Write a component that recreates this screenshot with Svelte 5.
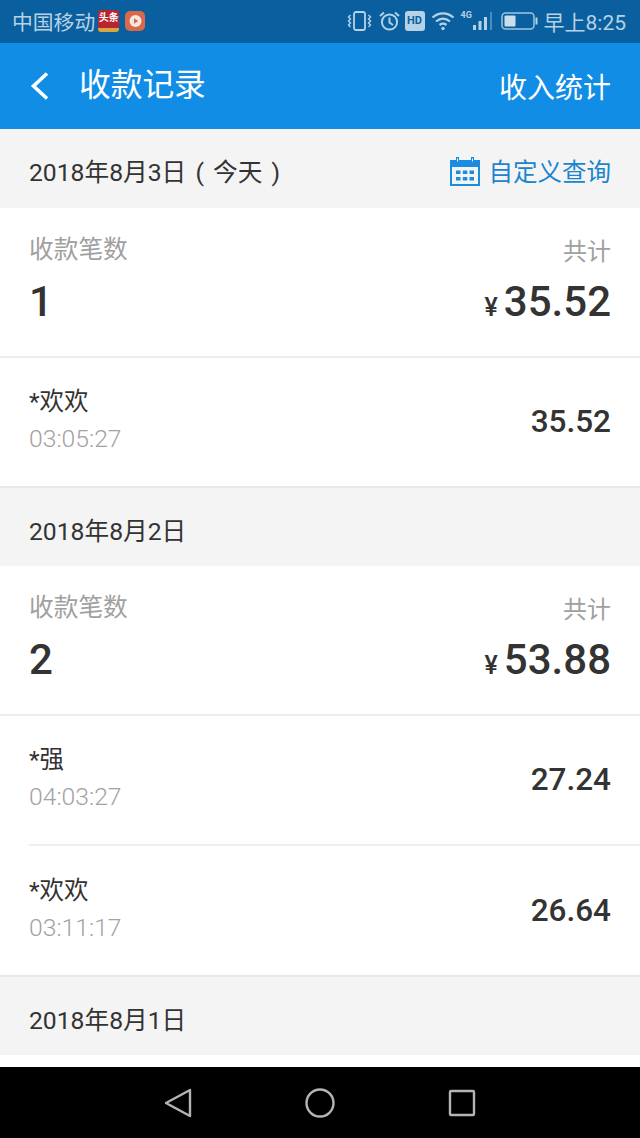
<script>
  const days = [
    { date: '2018年8月3日 ( 今天 )', today: true, count: 1, total: '35.52', rows: [{ name: '*欢欢', time: '03:05:27', amount: '35.52' }] },
    { date: '2018年8月2日', count: 2, total: '53.88', rows: [{ name: '*强', time: '04:03:27', amount: '27.24' }, { name: '*欢欢', time: '03:11:17', amount: '26.64' }] },
    { date: '2018年8月1日', rows: [] }
  ];
</script>

<div class="page">
  <div class="status">
    <div class="status-left">
      <span>中国移动</span>
      <span class="app-red">头条</span>
      <span class="app-video">
        <svg width="15" height="15" viewBox="0 0 14 14"><circle cx="7" cy="7.400" r="5.600" fill="#f4e9e2"/><path d="M5.600 5v5l4-2.500z" fill="#d8694a"/></svg>
      </span>
    </div>
    <div class="status-right">
      <svg class="s-vib" width="25" height="22" viewBox="0 0 25 22" fill="none" stroke="#b5d2e6" stroke-width="1.800">
        <rect x="7" y="2" width="11" height="18" rx="2"/>
        <path d="M3.500 5L1.500 7l2 2-2 2 2 2-2 2 2 2M21.500 5l2 2-2 2 2 2-2 2 2 2-2 2" stroke-width="1.400"/>
      </svg>
      <svg class="s-alarm" width="23" height="22" viewBox="0 0 23 22" fill="none" stroke="#b5d2e6" stroke-width="2">
        <circle cx="11.500" cy="12" r="7.600"/>
        <path d="M11.500 7.500v5l3.500 2.500M2 6l4-3.500M21 6l-4-3.500"/>
      </svg>
      <span class="hd">HD</span>
      <svg class="s-wifi" width="24" height="20" viewBox="0 0 24 20" fill="none" stroke="#b5d2e6" stroke-width="2.200">
        <path d="M1.500 6.500c6.500-5.500 14.500-5.500 21 0M5 10.500c4.500-3.800 9.500-3.800 14 0M8.500 14c2.500-1.800 4.500-1.800 7 0"/>
        <circle cx="12" cy="17.500" r="1.700" fill="#b5d2e6" stroke="none"/>
      </svg>
      <span class="signal">
        <span class="four-g">4G</span>
        <svg width="21" height="20" viewBox="0 0 21 20" fill="#b5d2e6">
          <rect x="1" y="14" width="3" height="5"/><rect x="6.500" y="10" width="3" height="9"/><rect x="12" y="6" width="3" height="13"/><rect x="18" y="1" width="2" height="18" opacity=".4"/>
        </svg>
      </span>
      <svg class="s-bat" width="37" height="18" viewBox="0 0 37 18" fill="none">
        <rect x="1" y="1" width="32" height="16" rx="3.500" stroke="#9fc3dc" stroke-width="1.500"/>
        <rect x="3.500" y="3.500" width="11" height="11" rx="1" fill="#c9dfed"/>
        <rect x="34.500" y="5.500" width="2" height="7" fill="#b5d2e6"/>
      </svg>
      <span class="clock">早上8:25</span>
    </div>
  </div>

  <header class="bar">
    <div class="bar-left">
      <svg width="21" height="30" viewBox="0 0 21 30" fill="none" stroke="#fff" stroke-width="3.600">
        <path d="M18 2.500L4.500 15 18 27.500"/>
      </svg>
      <span class="title">收款记录</span>
    </div>
    <span class="bar-link">收入统计</span>
  </header>

  <main class="list">
    {#each days as day}
      <div class="date-row" class:today={day.today}>
        <span class="date-text">{day.date}</span>
        {#if day.today}
          <span class="query">
            <svg width="30" height="30" viewBox="0 0 30 30">
              <path d="M1 5h28v24H1z" fill="none" stroke="#1b8de0" stroke-width="2"/>
              <path d="M1 5h28v6H1z" fill="#1b8de0"/>
              <path d="M7.500 1v6M22.500 1v6" stroke="#1b8de0" stroke-width="3"/>
              <path d="M7.500 2.500v3M22.500 2.500v3" stroke="#f4f4f4" stroke-width="1"/>
              <g fill="#1b8de0">
                <rect x="6" y="14.500" width="4.500" height="3.500"/><rect x="12.800" y="14.500" width="4.500" height="3.500"/><rect x="19.500" y="14.500" width="4.500" height="3.500"/>
                <rect x="6" y="21" width="4.500" height="3.500"/><rect x="12.800" y="21" width="4.500" height="3.500"/><rect x="19.500" y="21" width="4.500" height="3.500"/>
              </g>
            </svg>
            自定义查询
          </span>
        {/if}
      </div>
      {#if day.total}
        <section class="summary">
          <div>
            <div class="muted-label">收款笔数</div>
            <div class="count">{day.count}</div>
          </div>
          <div class="right">
            <div class="muted-sum">共计</div>
            <div class="total"><span class="yen">¥</span>{day.total}</div>
          </div>
        </section>
        <div class="rows">
          {#each day.rows as row, i}
            <div class="row-wrap" class:inset={i > 0}>
              <div class="row">
                <div class="who">
                  <div class="name">{row.name}</div>
                  <div class="time">{row.time}</div>
                </div>
                <div class="amount">{row.amount}</div>
              </div>
            </div>
          {/each}
        </div>
      {/if}
    {/each}
  </main>

  <nav class="nav">
    <svg width="28" height="30" viewBox="0 0 28 30" fill="none" stroke="#b4b4b4" stroke-width="2.400" stroke-linejoin="round">
      <path d="M26 2v26L2 15z"/>
    </svg>
    <svg width="30" height="30" viewBox="0 0 30 30" fill="none" stroke="#b4b4b4" stroke-width="2.400">
      <circle cx="15" cy="15" r="13.500"/>
    </svg>
    <svg width="28" height="28" viewBox="0 0 28 28" fill="none" stroke="#b4b4b4" stroke-width="2.400" stroke-linejoin="round">
      <rect x="2" y="2" width="24" height="24" rx="1"/>
    </svg>
  </nav>
</div>

<style>
  :global(body) {
    margin: 0;
    background: #fff;
  }
  .page {
    width: 640px;
    height: 1138px;
    display: flex;
    flex-direction: column;
    overflow: hidden;
    font-family: Roboto, "Noto Sans CJK SC", sans-serif;
    color: #333;
  }
  .status {
    height: 43px;
    flex: none;
    display: flex;
    justify-content: space-between;
    align-items: center;
    box-sizing: border-box;
    padding: 0 14px 2px 12px;
    background: #0a609e;
    color: #b5d2e6;
    font-size: 20.800px;
  }
  .status-left,
  .status-right {
    display: flex;
    align-items: center;
  }
  .app-red {
    width: 21px;
    height: 22px;
    margin-left: 3px;
    background: #b9252f;
    border-bottom: 4px solid #d9a441;
    box-sizing: border-box;
    border-radius: 3px;
    color: #fff;
    font-size: 10px;
    font-weight: 700;
    line-height: 15px;
    text-align: center;
    white-space: nowrap;
  }
  .app-video {
    width: 20px;
    height: 20px;
    margin-left: 6px;
    border-radius: 5px;
    background: #d8694a;
    display: flex;
    align-items: center;
    justify-content: center;
  }
  .s-vib {
    margin-right: 6px;
  }
  .s-alarm {
    margin-right: 4px;
  }
  .s-wifi {
    margin-right: 6px;
  }
  .s-bat {
    margin-right: 6px;
  }
  .hd {
    width: 20px;
    height: 20px;
    margin-right: 6px;
    border-radius: 3px;
    background: #b5d2e6;
    color: #0a609e;
    font-size: 11px;
    font-weight: 700;
    line-height: 20px;
    text-align: center;
  }
  .signal {
    display: flex;
    position: relative;
    width: 32px;
    justify-content: flex-start;
    padding-left: 11px;
    box-sizing: border-box;
    margin-right: 8px;
  }
  .four-g {
    position: absolute;
    left: 0;
    top: -1px;
    font-size: 9px;
    font-weight: 700;
  }
  .clock {
    font-size: 21px;
  }
  .bar {
    height: 86px;
    flex: none;
    display: flex;
    justify-content: space-between;
    align-items: center;
    box-sizing: border-box;
    padding: 0 29px;
    background: #118de6;
    color: #fff;
  }
  .bar-left {
    display: flex;
    align-items: center;
    gap: 29px;
  }
  .title {
    font-size: 31.700px;
    line-height: 40px;
  }
  .bar-link {
    font-size: 28px;
  }
  .list {
    flex: 1;
    overflow: hidden;
  }
  .date-row {
    height: 78px;
    display: flex;
    justify-content: space-between;
    align-items: center;
    box-sizing: border-box;
    padding: 0 29px;
    background: #f4f4f4;
    font-size: 24.700px;
  }
  .date-row.today {
    height: 79px;
  }
  .date-text {
    padding-top: 3px;
    word-spacing: 3px;
  }
  .query {
    display: flex;
    align-items: center;
    gap: 9px;
    margin-top: 4px;
    color: #1a84cf;
    font-size: 24.500px;
  }
  .summary {
    height: 150px;
    box-sizing: border-box;
    padding: 27px 29px 0;
    display: flex;
    justify-content: space-between;
    background: #fff;
    border-bottom: 2px solid #eeeeee;
  }
  .muted-label {
    font-size: 24.700px;
    line-height: 30px;
    color: #a0a0a0;
  }
  .muted-sum {
    font-size: 24px;
    line-height: 34px;
    color: #a0a0a0;
  }
  .count {
    font-size: 42px;
    line-height: 48px;
    font-weight: 500;
    margin-top: 13px;
  }
  .right {
    text-align: right;
  }
  .total {
    font-size: 42px;
    line-height: 48px;
    font-weight: 500;
    margin-top: 9px;
  }
  .yen {
    font-size: 25px;
    margin-right: 6px;
  }
  .rows {
    border-bottom: 2px solid #e8e8e8;
  }
  .row-wrap {
    height: 128px;
  }
  .row-wrap.inset {
    border-top: 2px solid #efefef;
    margin-left: 29px;
    box-sizing: border-box;
    height: 131px;
  }
  .row-wrap.inset .row {
    padding-left: 0;
  }
  .row {
    height: 100%;
    display: flex;
    justify-content: space-between;
    align-items: center;
    box-sizing: border-box;
    padding: 0 29px;
  }
  .who {
    padding-bottom: 4px;
  }
  .name {
    font-size: 24.500px;
    line-height: 37px;
  }
  .time {
    font-size: 24.700px;
    line-height: 37px;
    color: #a2a2a2;
    font-weight: 300;
  }
  .amount {
    font-size: 31.500px;
    font-weight: 500;
    padding-bottom: 1px;
  }
  .nav {
    height: 71px;
    flex: none;
    background: #000;
    display: flex;
    align-items: center;
    justify-content: center;
    gap: 113px;
  }
</style>
